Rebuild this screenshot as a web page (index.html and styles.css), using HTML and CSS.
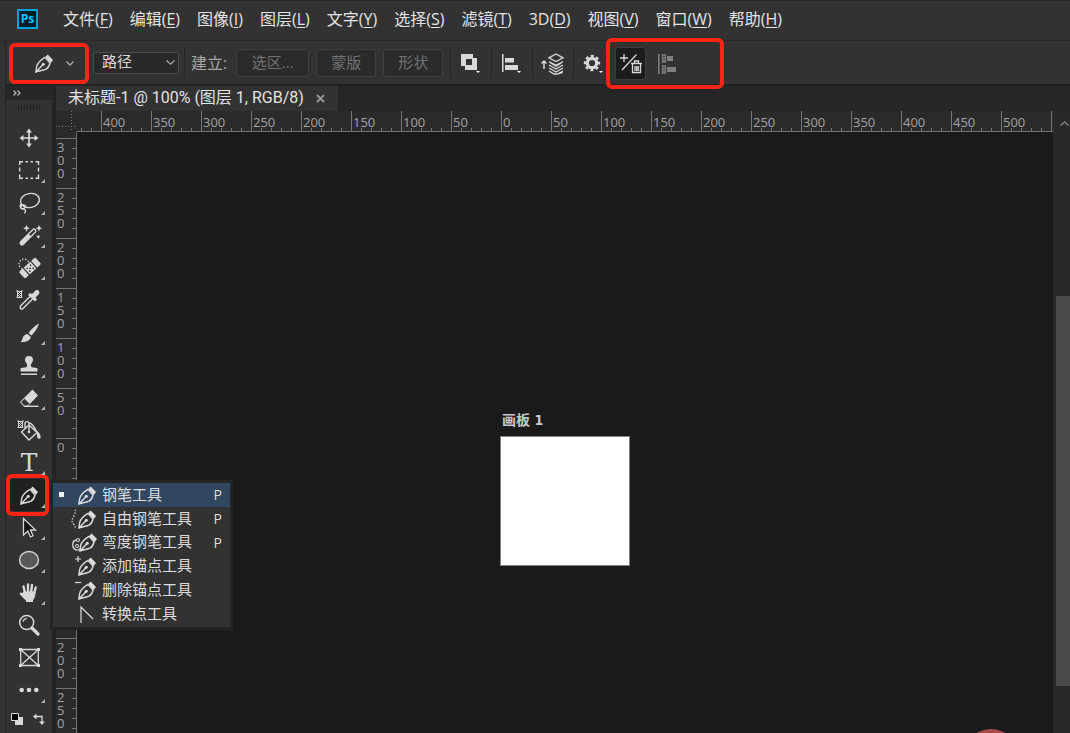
FILE: index.html
```html
<!DOCTYPE html>
<html lang="zh-CN">
<head>
<meta charset="utf-8">
<meta name="viewport" content="width=device-width, initial-scale=1">
<title>未标题-1</title>
<link rel="stylesheet" href="styles.css">
</head>
<body>
<svg class="sprite" aria-hidden="true">
  <symbol id="pen" viewBox="0 0 18 19">
    <path d="M.8 18.2 1.7 12.5C2.2 9.7 4 7 10 3.4L15 9c-.6 3-2 5-4 6.200C8.500 16.500 4 16.600.8 18.200ZM1.200 17.800 7.600 11" fill="none" stroke="currentColor" stroke-width="1.400" stroke-linejoin="round"/>
    <circle cx="8.300" cy="10.300" r="1.500" fill="currentColor"/>
    <path d="M10.200 3 12.700.6 18 6l-2.200 3Z" fill="currentColor"/>
  </symbol>
  <symbol id="checker" viewBox="0 0 7 8">
    <path d="M.5 0h1v1h4V0h1v1.500l-.5.500v5l.5 1h-6L1 6V2L.5 1Z" fill="currentColor"/>
    <path d="M2 2h1v1H2zM4 2h1v1H4zM3 3h1v1H3zM2 4h1v1H2zM4 4h1v1H4zM3 5h1v1H3zM2 6h1v1H2zM4 6h1v1H4z" fill="#222"/>
  </symbol>
</svg>

<header class="menubar">
  <span class="logo">Ps</span>
  <nav class="menus">
    <a href="#">文件(<u>F</u>)</a>
    <a href="#">编辑(<u>E</u>)</a>
    <a href="#">图像(<u>I</u>)</a>
    <a href="#">图层(<u>L</u>)</a>
    <a href="#">文字(<u>Y</u>)</a>
    <a href="#">选择(<u>S</u>)</a>
    <a href="#">滤镜(<u>T</u>)</a>
    <a href="#">3D(<u>D</u>)</a>
    <a href="#">视图(<u>V</u>)</a>
    <a href="#">窗口(<u>W</u>)</a>
    <a href="#">帮助(<u>H</u>)</a>
  </nav>
</header>

<section class="options" aria-label="工具选项">
  <button class="preset marked" aria-label="钢笔工具预设">
    <svg width="18" height="19"><use href="#pen"/></svg>
    <svg width="8" height="5" viewBox="0 0 8 5"><path d="M.5.500 4 4 7.500.500" fill="none" stroke="#aaa" stroke-width="1.300"/></svg>
  </button>
  <div class="mode">
    <select aria-label="工具模式"><option>路径</option></select>
    <svg width="9" height="5" viewBox="0 0 9 5"><path d="M.5.500 4.500 4.200 8.500.500" fill="none" stroke="#aaa" stroke-width="1.300"/></svg>
  </div>
  <span class="make">建立:</span>
  <button class="build build-wide" disabled>选区...</button>
  <button class="build" disabled>蒙版</button>
  <button class="build" disabled>形状</button>
  <div class="ops">
    <button aria-label="路径操作"><svg width="20" height="20" viewBox="0 0 20 20" fill="currentColor"><path fill-rule="evenodd" d="M0 0h12v4h4v12H4v-4H0ZM5 5v6h6V5Z"/><path d="M15 17h4l-2 2z" fill="#fff"/></svg></button>
    <button aria-label="路径对齐方式"><svg width="20" height="20" viewBox="0 0 20 20" fill="currentColor"><path d="M0 0h1.500v18H0zM3 4h9v4.500H3zM3 11h13v5H3z"/><path d="M15 17h4l-2 2z" fill="#fff"/></svg></button>
    <button aria-label="路径排列方式"><svg width="24" height="22" viewBox="0 0 24 22"><path d="M3 16V8M.5 10.500 3 8l2.500 2.500" fill="none" stroke="currentColor" stroke-width="1.500"/><path d="M15 1 22 4.800 15 8.500 8 4.800Z" fill="none" stroke="currentColor" stroke-width="1.400"/><path d="m8 8 7 3.500L22 8v1.500L15 14 8 9.500Z" fill="currentColor"/><path d="m8 12 7 4 7-4M8 15l7 4 7-4M8 18l5 3h4l5-3" fill="none" stroke="currentColor" stroke-width="1.300"/><path d="M18 19h4l-2 2z" fill="#fff"/></svg></button>
    <button aria-label="设置"><svg width="20" height="20" viewBox="0 0 20 20"><circle cx="8" cy="9" r="4.700" fill="none" stroke="currentColor" stroke-width="3.200"/><circle cx="8" cy="9" r="7" fill="none" stroke="currentColor" stroke-width="2.400" stroke-dasharray="3 2.498" stroke-dashoffset="1.500"/><path d="M15 17h4l-2 2z" fill="#fff"/></svg></button>
  </div>
  <div class="auto marked">
    <button class="pressed" aria-label="自动添加/删除" aria-pressed="true"><svg width="24" height="22" viewBox="0 0 24 22" fill="none" stroke="currentColor" stroke-width="1.300"><path d="M5 1v8M1 5h8M3 17 17.500 1.500M12 10.500h11M15.500 10V8h4v2M13.500 11v8.500h8V11M16 13v5M17.700 13v5M19.300 13v5"/></svg></button>
    <button class="dim" aria-label="对齐边缘"><svg width="19" height="22" viewBox="0 0 19 22" fill="currentColor"><path d="M0 1h1.500v20H0zM9 3h6v5H9zM9 14h9v5H9z"/><path d="M4.500 2h3v3h-3zM4.500 7h3v2h-3zM4.500 13h3v3h-3zM4.500 18h3v2h-3z" fill="none" stroke="currentColor" stroke-width="1.300"/></svg></button>
  </div>
</section>

<main class="workspace">
  <aside class="toolbox">
    <button class="expand" aria-label="展开面板"><svg width="8" height="6" viewBox="0 0 8 6" fill="none" stroke="#bbb" stroke-width="1.200"><path d="m.5.500 2.500 2.500L.5 5.500M4.500.500 7 3 4.500 5.500"/></svg></button>
    <div class="grip"></div>
    <ul class="tools">
      <li><button aria-label="移动"><svg class="icon" viewBox="0 0 24 24"><path d="M12 4v16M4 12h16" stroke="currentColor" stroke-width="1.700"/><path d="m12 2.500 3 4H9ZM12 21.500l3-4H9ZM2.500 12l4-3v6ZM21.500 12l-4-3v6Z" fill="currentColor"/></svg></button></li>
      <li class="more"><button aria-label="矩形选框"><svg class="icon" viewBox="0 0 24 24"><path d="M2.700 7V3.700H6M8.500 3.700h2.500M13.500 3.700H16M18.500 3.700h3V7M21.500 9.500v4M21.500 16.500v3.800h-3M16 20.300h-2.500M11 20.300H8.500M6 20.300H2.700v-3.800M2.700 13.500v-4" fill="none" stroke="currentColor" stroke-width="1.400"/></svg></button></li>
      <li class="more"><button aria-label="套索"><svg class="icon" viewBox="0 0 24 24" fill="none" stroke="currentColor" stroke-width="1.400"><ellipse cx="13" cy="9.500" rx="9.500" ry="7" transform="rotate(-10 13 9.500)"/><path d="M4 13c-2 2.500 0 5 2.500 4.500s3-3 .5-3.500-4 2-3 3.500c1.500 1 4 0 4.500 2s-1.500 1-.5 3"/></svg></button></li>
      <li class="more"><button aria-label="魔棒"><svg class="icon" viewBox="0 0 24 24"><path d="m5 20 12-12" stroke="currentColor" stroke-width="5" stroke-linecap="round"/><path d="m13.500 11.500 3.500-3.500" stroke="#333" stroke-width="2.300" stroke-linecap="round"/><path d="m9.500 2 1 2.300 2.300 1-2.300 1-1 2.300-1-2.300-2.300-1 2.300-1ZM22 2l1 2.300 2 1-2 1-1 2.300-1-2.300-2.300-1 2.300-1ZM21.300 11.500l.7 1.500 1.500.7-1.500.7-.7 1.500-.7-1.500-1.500-.7 1.500-.7Z" fill="currentColor"/></svg></button></li>
      <li class="more"><button aria-label="修复画笔"><svg class="icon" viewBox="0 0 24 24"><circle cx="7" cy="8" r="5" fill="none" stroke="currentColor" stroke-width="1.200" stroke-dasharray="1.500 1.500"/><g transform="rotate(-42 13 12)"><rect x="2" y="7.500" width="22" height="9" rx="1.500" fill="currentColor"/><path d="M8 7v10M18 7v10" stroke="#333" stroke-width="1.200"/><path d="M10 9.500h1.500v1.500H10zM14.500 9.500H16v1.500h-1.500zM12.200 11.500h1.500V13h-1.500zM10 13.500h1.500V15H10zM14.500 13.500H16V15h-1.500z" fill="#333"/></g></svg></button></li>
      <li><button aria-label="吸管"><svg class="icon" viewBox="0 0 24 24"><use href="#checker" x="-1" y="2" width="7" height="8"/><path d="m13 8.500-9 9c-1 1-1 2-.5 3s2 .5 3-.500l9-9" fill="none" stroke="currentColor" stroke-width="1.500"/><path d="m11 7 2-2 2 1 3.500-3.500c2-1.500 5 1 3.500 3.500L18.500 9.500l1.500 2-2 2Z" fill="currentColor"/></svg></button></li>
      <li class="more"><button aria-label="画笔"><svg class="icon" viewBox="0 0 24 24" fill="currentColor"><path d="M22 2.500c-1 4-4.500 9-7.500 12L11.500 12C14 8.500 18 4.500 22 2.500ZM10.500 13l3.200 2.700c-.2 4-5 5.800-10.200 5.300 2-1.500 1.500-3 2.500-5s3-3 4.500-3Z"/></svg></button></li>
      <li class="more"><button aria-label="仿制图章"><svg class="icon" viewBox="0 0 24 24" fill="currentColor"><path d="M12 3a4 4 0 0 1 4 4c0 2.500-2.200 3-2.200 5.500 0 1.500 1 2 6 2.500.5 0 .7.500.7 1v2.500h-17V16c0-.5.200-1 .7-1 5-.5 6-1 6-2.500C10.200 10 8 9.500 8 7a4 4 0 0 1 4-4ZM4 20.500h16V22H4z"/></svg></button></li>
      <li class="more"><button aria-label="橡皮擦"><svg class="icon" viewBox="0 0 24 24"><path d="m3 16 12.500-12.500 5.500 6L10.500 20.500H6.800Z" fill="currentColor"/><path d="m4.200 16 3.300-3.300 5 5L10 19.700H7.400Z" fill="#333"/><path d="M7 20.300h14.500" stroke="currentColor" stroke-width="1.400"/></svg></button></li>
      <li><button aria-label="油漆桶"><svg class="icon" viewBox="0 0 24 24"><use href="#checker" x="0" y="2" width="7" height="8"/><path d="M12 7 4.500 14 12 22l8-7.500ZM8 11V5.500C8 3 12 3 12 5.500V14M12 5c3 0 5 3 8 9.500" fill="none" stroke="currentColor" stroke-width="1.400"/><circle cx="12" cy="14" r="1.300" fill="currentColor"/><path d="M20 13c3 2 4.500 6 3 7.500-2 1-3-1-3-3Z" fill="currentColor"/></svg></button></li>
      <li class="more"><button class="type" aria-label="横排文字">T</button></li>
      <li class="more current"><button class="marked" aria-label="钢笔" aria-haspopup="menu"><svg width="18" height="19"><use href="#pen"/></svg></button>
        <ul class="flyout" role="menu">
          <li class="chosen"><button role="menuitem"><svg class="nib" viewBox="0 0 25 20"><use href="#pen" x="6" y="1" width="18" height="19"/></svg><span>钢笔工具</span><kbd>P</kbd></button></li>
          <li><button role="menuitem"><svg class="nib" viewBox="0 0 25 20"><use href="#pen" x="6" y="1" width="18" height="19"/><path d="M4 1C2 1 4 4 2 7s-3 5-.5 8S2 18 5 18.500" fill="none" stroke="currentColor" stroke-width="1.200" stroke-dasharray="1.500 1.500"/></svg><span>自由钢笔工具</span><kbd>P</kbd></button></li>
          <li><button role="menuitem"><svg class="nib" viewBox="0 0 25 20"><use href="#pen" x="7" y="0" width="18" height="19"/><path d="M5 7C1 7 0 11 1 14s4 4 7 2" fill="none" stroke="currentColor" stroke-width="1.300"/><circle cx="6" cy="7" r="1.600" fill="#323232" stroke="currentColor"/><circle cx="5" cy="13" r="1.600" fill="#323232" stroke="currentColor"/></svg><span>弯度钢笔工具</span><kbd>P</kbd></button></li>
          <li><button role="menuitem"><svg class="nib" viewBox="0 0 25 20"><use href="#pen" x="6" y="1" width="18" height="19"/><path d="M6 0v6M3 3h6" stroke="currentColor" stroke-width="1.200"/></svg><span>添加锚点工具</span></button></li>
          <li><button role="menuitem"><svg class="nib" viewBox="0 0 25 20"><use href="#pen" x="6" y="1" width="18" height="19"/><path d="M3 2.500h6" stroke="currentColor" stroke-width="1.200"/></svg><span>删除锚点工具</span></button></li>
          <li><button role="menuitem"><svg class="nib" viewBox="0 0 25 20"><path d="M9 19V3l12 12" fill="none" stroke="currentColor" stroke-width="1.200"/></svg><span>转换点工具</span></button></li>
        </ul>
      </li>
      <li class="more"><button aria-label="路径选择"><svg class="icon" viewBox="0 0 24 24"><path d="M6.500 2.500v16.500l4.300-4 2.700 6 2.500-1.200L13.500 14h5Z" fill="#111" stroke="currentColor" stroke-width="1.300"/></svg></button></li>
      <li class="more"><button aria-label="椭圆"><svg class="icon" viewBox="0 0 24 24"><ellipse cx="12" cy="12" rx="9.500" ry="8.500" fill="#595959" stroke="currentColor" stroke-width="1.400"/></svg></button></li>
      <li class="more"><button aria-label="抓手"><svg class="icon" viewBox="0 0 24 24"><path d="M8 12 6.500 5.500M11 11V3.500M14.200 11l.8-7M17.200 12l1.500-5.500M8.500 17l-4.700-4.300" fill="none" stroke="currentColor" stroke-width="2.400" stroke-linecap="round"/><path d="M6.700 10.500h11.800c0 5-1 7-2.500 8.500V21H9v-1.500c-2-1.500-3-3-5-6Z" fill="currentColor"/></svg></button></li>
      <li><button aria-label="缩放"><svg class="icon" viewBox="0 0 24 24" fill="none" stroke="currentColor"><circle cx="9.700" cy="9.500" r="7" stroke-width="1.500"/><path d="M6 8.500C6.500 6.500 8 5.500 10 5.500" stroke-width="1.200"/><path d="m15 15 6 6" stroke-width="3.200" stroke-linecap="round"/></svg></button></li>
      <li><button aria-label="画框"><svg class="icon" viewBox="0 0 24 24"><path d="M3.700 3.500h17.600v16H3.700ZM3.700 3.500l17.600 16M21.300 3.500l-17.600 16" fill="none" stroke="currentColor" stroke-width="1.300"/><path d="M2 2h3v3H2zM20 2h3v3h-3zM2 18h3v3H2zM20 18h3v3h-3z" fill="currentColor"/></svg></button></li>
      <li class="more"><button aria-label="更多工具"><svg class="icon" viewBox="0 0 24 24" fill="currentColor"><circle cx="4.700" cy="12" r="2.300"/><circle cx="12" cy="12" r="2.300"/><circle cx="19.300" cy="12" r="2.300"/></svg></button></li>
    </ul>
    <div class="colors">
      <button aria-label="默认颜色"><svg width="12" height="12" viewBox="0 0 12 12"><path d="M4 4h8v8H4z" fill="currentColor"/><path d="M.5.500h7v7h-7z" fill="#000" stroke="currentColor"/></svg></button>
      <button aria-label="切换颜色"><svg width="12" height="12" viewBox="0 0 12 12"><path d="M2 3.500h7v6" fill="none" stroke="currentColor" stroke-width="1.300"/><path d="m0 3.500 3.500-3v6ZM9 12 6 8.500h6Z" fill="currentColor"/></svg></button>
    </div>
  </aside>

  <section class="document">
    <div class="tabs">
      <div class="tab"><span>未标题-1 @ 100% (图层 1, RGB/8)</span>
        <button aria-label="关闭"><svg width="9" height="9" viewBox="0 0 9 9"><path d="m1 1 7 7M8 1 1 8" stroke="#999" stroke-width="1.800"/></svg></button></div>
    </div>
    <div class="view">
      <div class="corner"></div>
      <div class="ruler-x"><span>400</span><span>350</span><span>300</span><span>250</span><span>200</span><span>150</span><span>100</span><span>50</span><span>0</span><span>50</span><span>100</span><span>150</span><span>200</span><span>250</span><span>300</span><span>350</span><span>400</span><span>450</span><span>500</span><span></span></div>
      <div class="ruler-y"><span>300</span><span>250</span><span>200</span><span>150</span><span>100</span><span>50</span><span>0</span><span>50</span><span>100</span><span>150</span><span>200</span><span>250</span></div>
      <div class="canvas">
        <div class="artboard"><span class="artboard-name">画板 1</span></div>
        <div class="dot"></div>
      </div>
      <div class="scrollbar">
        <svg width="9" height="5" viewBox="0 0 9 5"><path d="M.5 4.500 4.500.800l4 3.700" fill="none" stroke="#888" stroke-width="1.300"/></svg>
        <div class="thumb"></div>
      </div>
    </div>
  </section>
</main>
</body>
</html>
```
FILE: styles.css
```css
:root {
  --panel: #323232;
  --line: #252525;
  --dark: #262626;
  --ink: #d8d8d8;
  --mark: #ff2414;
  --tick: #747474;
}

* { box-sizing: border-box; }

body {
  margin: 0;
  height: 100vh;
  display: flex;
  flex-direction: column;
  overflow: hidden;
  background: var(--panel);
  color: var(--ink);
  font: 15px/20px "Open Sans", "Noto Sans CJK SC", sans-serif;
}

button {
  display: flex;
  align-items: center;
  justify-content: center;
  padding: 0;
  border: 0;
  background: none;
  color: inherit;
  font: inherit;
}

ul { margin: 0; padding: 0; list-style: none; }
svg { display: block; flex: none; overflow: visible; }
.sprite { position: absolute; width: 0; height: 0; }

/* Red callout frames */
.marked { position: relative; }
.marked::after {
  content: "";
  position: absolute;
  inset: 0;
  border: 4px solid var(--mark);
  border-radius: 6px;
  pointer-events: none;
}

/* Menu bar */
.menubar {
  flex: none;
  display: flex;
  align-items: center;
  height: 41px;
  padding: 0 17px 4px;
  border-top: 1px solid var(--line);
  border-bottom: 1px solid #292929;
}
.logo {
  width: 21px;
  height: 20px;
  border: 2px solid #00a4d8;
  background: #001d29;
  color: #00c8ff;
  font: bold 12px/16px "Open Sans", sans-serif;
  text-align: center;
}
.menus { display: flex; gap: 17px; margin-left: 25px; font-size: 16px; white-space: nowrap; }
.menus a { color: #e4e4e4; text-decoration: none; }
.menus u { text-underline-offset: 2px; }

/* Options bar */
.options {
  flex: none;
  display: flex;
  align-items: center;
  height: 45px;
  margin-left: 5px;
  border-left: 1px solid var(--line);
  border-bottom: 2px solid #222;
}
.preset { width: 80px; height: 41px; margin: 2px 0 0 3px; gap: 13px; padding-left: 10px; }
.mode { position: relative; margin-left: 4px; }
.mode select {
  appearance: none;
  width: 86px;
  height: 22px;
  padding: 0 8px 4px;
  border: 1px solid #4a4a4a;
  border-radius: 3px;
  background: #292929;
  color: var(--ink);
  font: inherit;
  line-height: 16px;
}
.mode svg { position: absolute; right: 4px; top: 9px; pointer-events: none; }
.make {
  margin-left: 5px;
  padding: 5px 9px 5px 6px;
  border-left: 1px solid var(--line);
  color: #a8a8a8;
  font-size: 16px;
}
.build {
  width: 60px;
  height: 28px;
  margin-right: 7px;
  padding-bottom: 2px;
  border: 1px solid #404040;
  border-radius: 3px;
  background: #2b2b2b;
  color: #727272;
}
.build-wide { width: 73px; }
.ops { display: flex; margin-top: 2px; }
.ops button { width: 41px; height: 31px; border-left: 1px solid var(--line); }
.auto { display: flex; align-items: center; gap: 6px; width: 118px; height: 51px; margin: 2px 0 0 -8px; padding-left: 9px; }
.auto button { width: 31px; height: 33px; }
.auto .pressed { border: 1px solid #3d3d3d; border-radius: 3px; background: #1c1c1c; }
.auto .dim { color: #808080; }

/* Toolbox */
.workspace { flex: 1; display: flex; min-height: 0; }
.toolbox {
  flex: none;
  width: 56px;
  padding: 0 3px 0 5px;
  border-right: 1px solid #202020;
  background: linear-gradient(90deg, var(--panel) 5px, var(--line) 5px 6px, var(--panel) 6px 52px, var(--line) 52px);
}
.expand { width: 47px; height: 14px; padding-right: 24px; background: var(--dark); }
.grip {
  width: 24px;
  height: 5px;
  margin: 5px auto 12px 13px;
  background: repeating-linear-gradient(90deg, #222 0 1px, transparent 1px 3px);
}
.tools > li { position: relative; height: 32px; }
.tools > li:nth-child(even) { height: 33px; }
.tools > li > button { width: 100%; height: 32px; }
.icon { width: 24px; height: 24px; }
.more::before {
  content: "";
  position: absolute;
  z-index: 1;
  right: 7px;
  bottom: 4px;
  border: 2px solid;
  border-color: transparent #b4b4b4 #b4b4b4 transparent;
}
.tools .type { padding: 0 0 0 1px; font: 25px/34px "DejaVu Serif", serif; }
.tools > .current > button { width: 41px; margin-left: 2px; padding-left: 3px; background: #202020; }
.current > .marked::after { inset: -5px -1px; }
.colors { display: flex; justify-content: space-between; padding: 6px 7px 0 6px; }

/* Tool flyout */
.flyout {
  position: absolute;
  z-index: 2;
  left: 45px;
  top: 1px;
  width: 183px;
  border: 3px solid #242424;
  background: var(--panel);
}
.flyout button {
  width: 100%;
  height: 24px;
  justify-content: flex-start;
  gap: 5px;
  padding: 0 8px 0 19px;
  color: #dedede;
}
.flyout li:nth-child(3) button { height: 23px; }
.flyout li:last-child { padding-bottom: 1px; }
.flyout span { margin-bottom: 3px; }
.flyout .chosen button { padding-left: 6px; background: #30475f; }
.flyout .chosen button::before { content: ""; width: 5px; height: 5px; margin: 0 3px 2px 0; background: #eee; }
.nib { width: 25px; height: 20px; }
.flyout kbd { margin-left: auto; font: 14px/24px "Open Sans", sans-serif; }

/* Document window */
.document { flex: 1; display: flex; flex-direction: column; min-width: 0; }
.tabs { display: flex; height: 25px; background: var(--dark); }
.tab {
  display: flex;
  align-items: center;
  gap: 12px;
  padding: 0 13px 0 12px;
  background: var(--panel);
  white-space: nowrap;
}
.tab span { padding-bottom: 1px; color: #e2e2e2; font: 16px/20px Roboto, "Noto Sans CJK SC", sans-serif; }
.view {
  flex: 1;
  display: grid;
  grid-template: 21px 1fr / 21px 1fr 17px;
  min-height: 0;
}
.corner {
  background:
    repeating-linear-gradient(90deg, #777 0 1px, transparent 1px 3px) 0 15px / 100% 1px no-repeat,
    repeating-linear-gradient(#777 0 1px, transparent 1px 3px) 15px 0 / 1px 100% no-repeat,
    #2a2a2a;
}
.ruler-x, .ruler-y { display: flex; overflow: hidden; color: #a2a2a2; font: 13px/22px "Open Sans", sans-serif; }
.ruler-x {
  padding-left: 24px;
  border-bottom: 1px solid var(--tick);
  background: repeating-linear-gradient(90deg, transparent 0 4px, var(--tick) 4px 5px, transparent 5px 10px) 0 100% / 100% 3px no-repeat, #2a2a2a;
}
.ruler-x span { flex: none; width: 50px; padding-left: 1px; border-left: 1px solid var(--tick); }
.ruler-y {
  flex-direction: column;
  padding-top: 6px;
  border-right: 1px solid var(--tick);
  background: repeating-linear-gradient(transparent 0 6px, var(--tick) 6px 7px, transparent 7px 10px) 100% 0 / 4px 100% no-repeat, #2a2a2a;
  line-height: 13px;
}
.ruler-y span { flex: none; height: 50px; padding: 2px 11px 0 1px; border-top: 1px solid var(--tick); word-break: break-all; }
.canvas { position: relative; overflow: hidden; background: #1a1a1a; }
.artboard { position: absolute; left: 423px; top: 304px; width: 130px; height: 130px; border: 1px solid #808080; background: #fff; }
.artboard-name {
  position: absolute;
  left: 1px;
  bottom: 135px;
  color: #c8c8c8;
  font: bold 14px/20px "DejaVu Sans Condensed", "Noto Sans CJK SC", sans-serif;
  white-space: nowrap;
}
.dot { position: absolute; left: 886px; top: 597px; width: 56px; height: 56px; border-radius: 50%; background: #a84a48; }
.scrollbar { grid-column: 3; grid-row: 1 / 3; display: flex; flex-direction: column; align-items: flex-end; padding: 10px 0 47px 3px; background: #292929; }
.scrollbar svg { margin-right: 1px; }
.thumb { flex: 1; width: 100%; margin-top: 170px; background: #494949; }
```
